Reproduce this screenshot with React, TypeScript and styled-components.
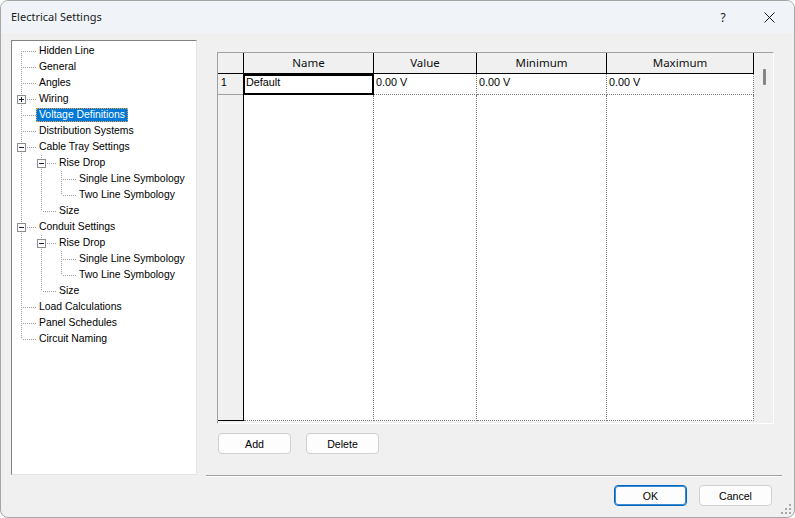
import React from 'react';
import styled, { createGlobalStyle } from 'styled-components';

const GlobalStyle = createGlobalStyle`
  html, body {
    margin: 0;
    padding: 0;
    background: #ffffff;
  }
  body {
    font-family: "Liberation Sans", Arial, sans-serif;
  }
`;

const Window = styled.div`
  position: relative;
  width: 795px;
  height: 518px;
  box-sizing: border-box;
  border: 1px solid #a6a6a6;
  border-radius: 8px;
  overflow: hidden;
  background: #f0f0f0;
  display: flex;
  flex-direction: column;
`;

const TitleBar = styled.div`
  flex: none;
  height: 32px;
  display: flex;
  align-items: center;
  background: #f0f4f9;
  padding: 0 2px 0 10px;
`;

const Title = styled.div`
  flex: 1;
  padding-bottom: 2px;
  font-family: "Noto Sans", "Open Sans", sans-serif;
  font-size: 11px;
  color: #1a1a1a;
`;

const TitleButton = styled.div`
  width: 46px;
  height: 32px;
  display: flex;
  align-items: center;
  justify-content: center;
  font-family: "Noto Sans", sans-serif;
  font-size: 12px;
  color: #1a1a1a;
`;

const Body = styled.div`
  flex: none;
  display: flex;
  gap: 9px;
  padding: 7px 0 0 10px;
`;

const Tree = styled.div`
  width: 186px;
  height: 435px;
  box-sizing: border-box;
  padding-top: 2px;
  background: #ffffff;
  border: 1px solid;
  border-color: #828282 #e3e3e3 #e3e3e3 #828282;
  display: flex;
  flex-direction: column;
`;

const TreeRow = styled.div`
  flex: none;
  height: 16px;
  display: flex;
  align-items: flex-start;
`;

const TreeLabel = styled.span<{ $selected?: boolean }>`
  height: 14px;
  margin-top: 1px;
  box-sizing: border-box;
  padding: 0 2px;
  border: 1px ${p => (p.$selected ? 'dotted #f0a040' : 'solid transparent')};
  background: ${p => (p.$selected ? '#0078d7' : 'transparent')};
  color: ${p => (p.$selected ? '#ffffff' : '#000000')};
  font-size: 10.4px;
  line-height: 12px;
  white-space: nowrap;
`;

const RightPanel = styled.div`
  width: 576px;
  height: 436px;
  box-sizing: border-box;
  padding: 12px 8px 21px 11px;
  border-bottom: 1px solid #a0a0a0;
  box-shadow: 0 1px 0 #ffffff;
  display: flex;
  flex-direction: column;
`;

const GridFrame = styled.div`
  width: 557px;
  height: 372px;
  box-sizing: border-box;
  border: 1px solid;
  border-color: #a0a0a0 #ffffff #ffffff #a0a0a0;
  background: #f0f0f0;
  display: flex;
  align-items: flex-start;
`;

const Columns = styled.div`
  display: flex;
  height: 368px;
`;

const Column = styled.div<{ $w: number }>`
  width: ${p => p.$w}px;
  height: 100%;
  display: flex;
  flex-direction: column;
`;

const HeaderCell = styled.div`
  flex: none;
  height: 21px;
  box-sizing: border-box;
  border-right: 1px solid #000000;
  border-bottom: 1px solid #000000;
  background: #f0f0f0;
  font-family: "Noto Sans", "Open Sans", sans-serif;
  font-size: 11.5px;
  line-height: 19px;
  text-align: center;
  color: #111111;
`;

const RowHead = styled.div<{ $fill?: boolean }>`
  flex: ${p => (p.$fill ? 1 : 'none')};
  height: ${p => (p.$fill ? 'auto' : '21px')};
  box-sizing: border-box;
  border-right: 1px solid #000000;
  border-bottom: 1px solid ${p => (p.$fill ? '#000000' : '#a0a0a0')};
  background: #f0f0f0;
  padding-left: 3px;
  font-size: 10.4px;
  line-height: 17px;
  color: #000000;
`;

const DataCell = styled.div<{ $fill?: boolean; $selected?: boolean }>`
  flex: ${p => (p.$fill ? 1 : 'none')};
  height: ${p => (p.$fill ? 'auto' : '21px')};
  box-sizing: border-box;
  border-right: 1px dotted #7a7a7a;
  border-bottom: 1px dotted #7a7a7a;
  background: #ffffff;
  padding-left: ${p => (p.$selected ? '3px' : '2px')};
  font-size: 10.8px;
  line-height: 17px;
  color: #000000;
  outline: ${p => (p.$selected ? '2px solid #000000' : 'none')};
  outline-offset: -2px;
  margin-left: ${p => (p.$selected ? '-1px' : '0')};
`;

const ScrollArea = styled.div`
  flex: 1;
  height: 100%;
  display: flex;
  justify-content: center;
  padding-top: 16px;
  box-sizing: border-box;
`;

const ScrollThumb = styled.div`
  width: 3px;
  height: 16px;
  margin-left: 1px;
  border-radius: 1px;
  background: #868686;
`;

const ButtonRow = styled.div<{ $end?: boolean }>`
  display: flex;
  gap: ${p => (p.$end ? '12px' : '15px')};
  justify-content: ${p => (p.$end ? 'flex-end' : 'flex-start')};
  margin-top: 9px;
  padding-left: ${p => (p.$end ? '0' : '1px')};
  padding-right: ${p => (p.$end ? '22px' : '0')};
`;

const Button = styled.div<{ $primary?: boolean }>`
  width: 73px;
  height: 21px;
  box-sizing: border-box;
  border-radius: 4px;
  border: 1px solid ${p => (p.$primary ? '#0067c0' : '#d0d0d0')};
  box-shadow: ${p => (p.$primary ? 'inset 0 0 0 1px #3c8ad0' : 'none')};
  background: #fdfdfd;
  display: flex;
  align-items: center;
  justify-content: center;
  font-size: 10.6px;
  color: #000000;
`;

const Grip = styled.svg`
  position: absolute;
  right: 2px;
  bottom: 2px;
`;

type Node = { label: string; children?: Node[]; expanded?: boolean; selected?: boolean };

const symbology = (): Node[] => [{ label: 'Single Line Symbology' }, { label: 'Two Line Symbology' }];
const riseAndSize = (): Node[] => [
  { label: 'Rise Drop', expanded: true, children: symbology() },
  { label: 'Size' },
];

const tree: Node[] = [
  { label: 'Hidden Line' },
  { label: 'General' },
  { label: 'Angles' },
  { label: 'Wiring', children: [{ label: 'Wires' }] },
  { label: 'Voltage Definitions', selected: true },
  { label: 'Distribution Systems' },
  { label: 'Cable Tray Settings', expanded: true, children: riseAndSize() },
  { label: 'Conduit Settings', expanded: true, children: riseAndSize() },
  { label: 'Load Calculations' },
  { label: 'Panel Schedules' },
  { label: 'Circuit Naming' },
];

type Row = { node: Node; guides: boolean[]; first: boolean; last: boolean };

function flatten(nodes: Node[], guides: boolean[], out: Row[]) {
  nodes.forEach((n, i) => {
    const last = i === nodes.length - 1;
    out.push({ node: n, guides, first: guides.length === 0 && i === 0, last });
    if (n.children && n.expanded) flatten(n.children, [...guides, !last], out);
  });
}

const rows: Row[] = [];
flatten(tree, [], rows);

const DOT = '#a0a0a0';

const Guide = ({ on }: { on: boolean }) => (
  <svg width={20} height={16}>
    {on && <line x1={9.5} x2={9.5} y1={0} y2={16} stroke={DOT} strokeDasharray="1 1" />}
  </svg>
);

const Connector = ({ row }: { row: Row }) => {
  const { node, first, last } = row;
  const hasKids = !!node.children;
  return (
    <svg width={24} height={16}>
      <line x1={9.5} x2={9.5} y1={first ? 8 : 0} y2={last ? 8 : 16} stroke={DOT} strokeDasharray="1 1" />
      <line x1={11} x2={24} y1={8.5} y2={8.5} stroke={DOT} strokeDasharray="1 1" />
      {hasKids && (
        <g>
          <rect x={5.5} y={4.5} width={8} height={8} fill="#fbfbfb" stroke="#8e8e8e" />
          <line x1={7} x2={12} y1={8.5} y2={8.5} stroke="#1a2440" />
          {!node.expanded && <line x1={9.5} x2={9.5} y1={6} y2={11} stroke="#1a2440" />}
        </g>
      )}
    </svg>
  );
};

const columns = [
  { name: 'Name', w: 130, value: 'Default' },
  { name: 'Value', w: 103, value: '0.00 V' },
  { name: 'Minimum', w: 130, value: '0.00 V' },
  { name: 'Maximum', w: 147, value: '0.00 V' },
];

const App: React.FC = () => {
  return (
    <>
      <GlobalStyle />
      <Window>
        <TitleBar>
          <Title>Electrical Settings</Title>
          <TitleButton>?</TitleButton>
          <TitleButton>
            <svg width={11} height={11}>
              <line x1={0.5} y1={0.5} x2={10.5} y2={10.5} stroke="#1a1a1a" strokeWidth={1} />
              <line x1={10.5} y1={0.5} x2={0.5} y2={10.5} stroke="#1a1a1a" strokeWidth={1} />
            </svg>
          </TitleButton>
        </TitleBar>

        <Body>
          <Tree>
            {rows.map((r, i) => (
              <TreeRow key={i}>
                {r.guides.map((g, j) => (
                  <Guide key={j} on={g} />
                ))}
                <Connector row={r} />
                <TreeLabel $selected={r.node.selected}>{r.node.label}</TreeLabel>
              </TreeRow>
            ))}
          </Tree>

          <RightPanel>
            <GridFrame>
              <Columns>
                <Column $w={26}>
                  <HeaderCell />
                  <RowHead>1</RowHead>
                  <RowHead $fill />
                </Column>
                {columns.map((c, i) => (
                  <Column key={c.name} $w={c.w}>
                    <HeaderCell>{c.name}</HeaderCell>
                    <DataCell $selected={i === 0}>{c.value}</DataCell>
                    <DataCell $fill />
                  </Column>
                ))}
              </Columns>
              <ScrollArea>
                <ScrollThumb />
              </ScrollArea>
            </GridFrame>
            <ButtonRow>
              <Button>Add</Button>
              <Button>Delete</Button>
            </ButtonRow>
          </RightPanel>
        </Body>

        <ButtonRow $end>
          <Button $primary>OK</Button>
          <Button>Cancel</Button>
        </ButtonRow>

        <Grip width={12} height={12}>
          {[
            [9, 1],
            [9, 5],
            [5, 5],
            [9, 9],
            [5, 9],
            [1, 9],
          ].map(([x, y], i) => (
            <rect key={i} x={x} y={y} width={2} height={2} fill="#a8a8a8" />
          ))}
        </Grip>
      </Window>
    </>
  );
};

export default App;
